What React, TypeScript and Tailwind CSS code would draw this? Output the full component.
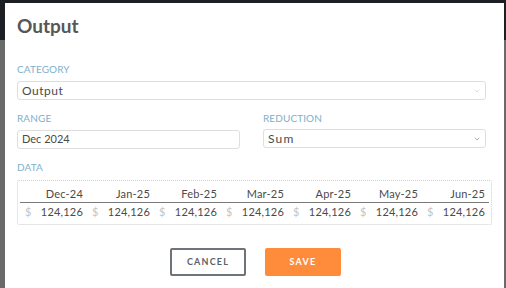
import { ChevronDown } from 'lucide-react';

const months = ['Dec-24', 'Jan-25', 'Feb-25', 'Mar-25', 'Apr-25', 'May-25', 'Jun-25'];

function Label({ children }: { children: string }) {
  return <div className="text-[10px] leading-[12px] uppercase text-[#7fb0c9] tracking-[0.1px]">{children}</div>;
}

export default function App() {
  return (
    <div className="relative w-[506px] h-[288px] overflow-hidden bg-[#6a6a6a] font-['Lato',sans-serif]">
      <div className="h-[40px] bg-[#1c1f24]" />

      <div className="absolute left-[5px] top-[3px] w-[499px] h-[300px] bg-white px-[12px]">
        <h1 className="mt-[12px] text-[19px] leading-[22px] font-bold text-[#575757]">Output</h1>

        <div className="mt-[26px]">
          <Label>CATEGORY</Label>
          <div className="mt-[6px] w-[469px] h-[19px] border border-[#dedede] rounded-[3px] flex items-center justify-between px-[4px]">
            <span className="text-[12px] text-[#4a4a4a] tracking-[0.5px]">Output</span>
            <ChevronDown className="w-[8px] h-[8px] text-[#cccccc]" strokeWidth={2} />
          </div>
        </div>

        <div className="mt-[12px] flex gap-[23px]">
          <div>
            <Label>RANGE</Label>
            <div className="mt-[6px] w-[223px] h-[19px] border border-[#dedede] rounded-[3px] flex items-center px-[4px]">
              <span className="text-[11px] text-[#4a4a4a]">Dec 2024</span>
            </div>
          </div>
          <div>
            <Label>REDUCTION</Label>
            <div className="mt-[5px] w-[223px] h-[19px] border border-[#dedede] rounded-[3px] flex items-center justify-between px-[4px]">
              <span className="text-[12px] text-[#4a4a4a] tracking-[1.2px]">Sum</span>
              <ChevronDown className="w-[8px] h-[8px] text-[#888888]" strokeWidth={2} />
            </div>
          </div>
        </div>

        <div className="mt-[12px]">
          <Label>DATA</Label>
          <div className="mt-[7px] w-[475px] h-[45px] border border-dotted border-[#cfcfcf] rounded-[2px] px-[2px] pt-[6px]">
            <div className="grid grid-cols-7 border-b border-[#7a7a7a] pb-[1px]">
              {months.map((m) => (
                <div key={m} className="text-right pr-[4px] text-[11px] leading-[14px] text-[#4a4a4a] tracking-[0.2px]">
                  {m}
                </div>
              ))}
            </div>
            <div className="grid grid-cols-7 pt-[2px]">
              {months.map((m) => (
                <div key={m} className="flex justify-between pl-[5px] pr-[4px] text-[11px] leading-[14px] tracking-[0.2px]">
                  <span className="text-[#c4c4c4]">$</span>
                  <span className="text-[#4a4a4a]">124,126</span>
                </div>
              ))}
            </div>
          </div>
        </div>

        <div className="mt-[23px] flex justify-center gap-[19px] pl-[2px]">
          <button className="w-[76px] h-[28px] border-2 border-[#6d7379] rounded-[2px] text-[9px] font-bold tracking-[1.2px] text-[#5b6168]">
            CANCEL
          </button>
          <button className="w-[76px] h-[28px] bg-[#ff8c3b] rounded-[2px] text-[9px] font-bold tracking-[1.2px] text-white">
            SAVE
          </button>
        </div>
      </div>
    </div>
  );
}
